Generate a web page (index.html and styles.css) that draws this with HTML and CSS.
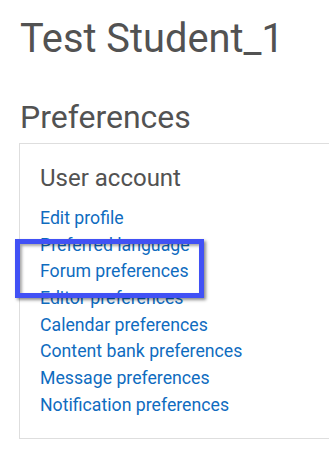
FILE: index.html
```html
<!DOCTYPE html>
<html>
<head>
<meta charset="utf-8">
<link rel="stylesheet" href="styles.css">
</head>
<body>
<div class="page">
  <h1 class="title">Test Student_1</h1>
  <h2 class="section-title">Preferences</h2>
  <div class="card">
    <h3 class="card-title">User account</h3>
    <ul class="links">
      <li><a href="#">Edit profile</a></li>
      <li><a href="#">Preferred language</a></li>
      <li><a href="#">Forum preferences</a></li>
      <li><a href="#">Editor preferences</a></li>
      <li><a href="#">Calendar preferences</a></li>
      <li><a href="#">Content bank preferences</a></li>
      <li><a href="#">Message preferences</a></li>
      <li><a href="#">Notification preferences</a></li>
    </ul>
    <div class="highlight"></div>
  </div>
</div>
</body>
</html>
```
FILE: styles.css
```css
html, body {
  margin: 0;
  padding: 0;
  background: #ffffff;
  overflow: hidden;
}
.page {
  padding: 14.6px 0 0 20px;
  font-family: Roboto, "Noto Sans", sans-serif;
  overflow: hidden;
}
.title {
  margin: 0;
  font-size: 39.8px;
  line-height: 48px;
  font-weight: 400;
  color: #525252;
}
.section-title {
  margin: 35.8px 0 0 0;
  font-size: 32px;
  line-height: 38px;
  font-weight: 400;
  color: #525252;
}
.card {
  position: relative;
  margin: 6.6px -40px 0 -1px;
  border: 1px solid #dedede;
  padding: 20.5px 20px 19.5px 20px;
}
.card-title {
  margin: 0;
  font-size: 24px;
  line-height: 28px;
  font-weight: 400;
  color: #525252;
}
.links {
  list-style: none;
  margin: 12.4px 0 0 0;
  padding: 0;
}
.links li {
  font-size: 17.7px;
  line-height: 26.7px;
}
.links a {
  color: #0f6cbf;
  text-decoration: none;
}
.highlight {
  position: absolute;
  left: -5px;
  top: 95px;
  width: 179px;
  height: 49px;
  border: 5px solid #4151f5;
  box-shadow: 2px 2px 3px rgba(0, 0, 0, 0.45), inset 2px 2px 3px rgba(0, 0, 0, 0.35);
}
```
